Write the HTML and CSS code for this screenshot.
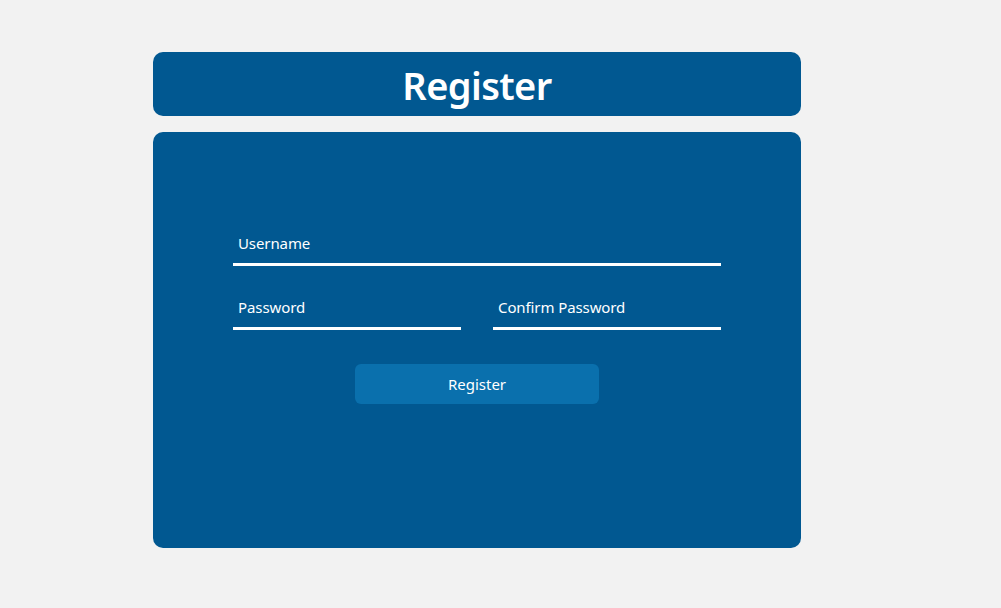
FILE: index.html
```html
<!DOCTYPE html>
<html lang="en">
<head>
<meta charset="utf-8">
<title>Register</title>
<link rel="stylesheet" href="styles.css">
</head>
<body>
<div class="page">
  <header class="title-card">
    <h1 class="title">Register</h1>
  </header>
  <main class="form-card">
    <form class="form">
      <input class="field" type="text" placeholder="Username">
      <div class="row">
        <input class="field" type="password" placeholder="Password">
        <input class="field" type="password" placeholder="Confirm Password">
      </div>
      <button class="submit" type="button">Register</button>
    </form>
  </main>
</div>
</body>
</html>
```

FILE: styles.css
```css
html, body {
  margin: 0;
  padding: 0;
  background: #f2f2f2;
  font-family: "Noto Sans", "Open Sans", sans-serif;
}

.page {
  width: 648px;
  padding: 52px 0 0 153px;
  display: flex;
  flex-direction: column;
  gap: 16px;
}

.title-card {
  height: 64px;
  background: #015891;
  border-radius: 10px;
  display: flex;
  align-items: center;
  justify-content: center;
}

.title {
  margin: 0;
  color: #ffffff;
  font-size: 38px;
  font-weight: 600;
  letter-spacing: -0.6px;
  line-height: 1;
  padding-top: 2px;
}

.form-card {
  height: 416px;
  box-sizing: border-box;
  background: #015891;
  border-radius: 10px;
  padding: 97px 80px 0 80px;
}

.form {
  display: flex;
  flex-direction: column;
  gap: 27px;
}

.row {
  display: flex;
  gap: 32px;
}

.row .field {
  flex: 1;
  min-width: 0;
}

.field {
  box-sizing: border-box;
  height: 37px;
  width: 100%;
  border: none;
  border-bottom: 3px solid #ffffff;
  background: transparent;
  color: #ffffff;
  font-family: inherit;
  font-size: 15px;
  letter-spacing: -0.1px;
  padding: 0 5px 6px 5px;
  outline: none;
}

.field::placeholder {
  color: #ffffff;
  opacity: 1;
}

.submit {
  align-self: center;
  margin-top: 7px;
  width: 244px;
  height: 40px;
  border: none;
  border-radius: 6px;
  background: #0a70ad;
  color: #ffffff;
  font-family: inherit;
  font-size: 15px;
  cursor: pointer;
}
```
